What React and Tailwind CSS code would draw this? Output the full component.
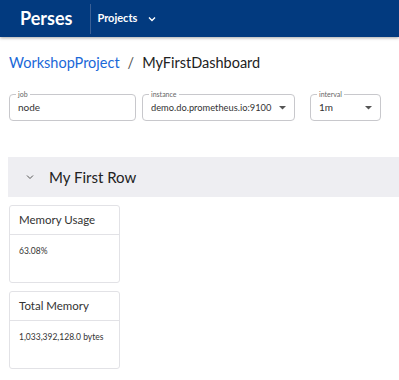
import React from 'react';

function Field({ label, value, width, select, size = 'text-[10px]' }) {
  return (
    <div className={`relative h-[27px] rounded-[4px] border border-[#c8c8cc] flex items-center pl-[8px] pr-[8px] ${width}`}>
      <span className="absolute -top-[6px] left-[6px] bg-white px-[2px] text-[7px] leading-[10px] text-[#666]">{label}</span>
      <span className={`flex-1 whitespace-nowrap overflow-hidden text-[#333] ${size}`}>{value}</span>
      {select && (
        <svg width="7" height="4" viewBox="0 0 7 4" className="ml-[4px] shrink-0">
          <path d="M0 0 L7 0 L3.5 3.5 Z" fill="#555" />
        </svg>
      )}
    </div>
  );
}

function Panel({ title, value }) {
  return (
    <div className="w-[111px] h-[78px] rounded-[3px] border border-[#e2e2e6] flex flex-col">
      <div className="h-[29px] flex items-center px-[9px] border-b border-[#e2e2e6] text-[11.5px] text-[#333]">{title}</div>
      <div className="px-[9px] pt-[10px] text-[8.5px] text-[#333]">{value}</div>
    </div>
  );
}

export default function App() {
  return (
    <div className="w-[399px] h-[380px] bg-white overflow-hidden" style={{ fontFamily: 'Lato, "Noto Sans", sans-serif' }}>
      <header className="h-[37px] bg-[#023a7f] flex items-center shadow-[0_1px_3px_rgba(0,0,0,0.35)]">
        <span className="ml-[20px] text-[18px] font-bold text-white">Perses</span>
        <div className="ml-[18px] w-px h-[30px] bg-[#3a5f95]" />
        <span className="ml-[6px] text-[11px] font-bold text-white">Projects</span>
        <svg width="8" height="6" viewBox="0 0 8 6" className="ml-[11px]">
          <path d="M1 1.5 L4 4.5 L7 1.5" stroke="white" strokeWidth="1.4" fill="none" />
        </svg>
      </header>

      <div className="mt-[16px] ml-[9px] flex items-center text-[14.5px] leading-[20px]">
        <span className="text-[#1a68d8]">WorkshopProject</span>
        <span className="mx-[8px] text-[#555]">/</span>
        <span className="text-[#222]">MyFirstDashboard</span>
      </div>

      <div className="mt-[21px] ml-[9px] flex">
        <Field label="job" value="node" width="w-[127px]" />
        <div className="ml-[6px]">
          <Field label="instance" value="demo.do.prometheus.io:9100" width="w-[153px]" size="text-[9.3px]" select />
        </div>
        <div className="ml-[15px]">
          <Field label="interval" value="1m" width="w-[71px]" select />
        </div>
      </div>

      <div className="mt-[36px] ml-[8px] h-[40px] bg-[#eeeef2] flex items-center">
        <svg width="8" height="6" viewBox="0 0 8 6" className="ml-[18px]">
          <path d="M1 1.5 L4 4.5 L7 1.5" stroke="#555" strokeWidth="1" fill="none" />
        </svg>
        <span className="ml-[15px] text-[15px] text-[#222]">My First Row</span>
      </div>

      <div className="mt-[8px] ml-[9px] flex flex-col gap-[8px]">
        <Panel title="Memory Usage" value="63.08%" />
        <Panel title="Total Memory" value="1,033,392,128.0 bytes" />
      </div>
    </div>
  );
}
